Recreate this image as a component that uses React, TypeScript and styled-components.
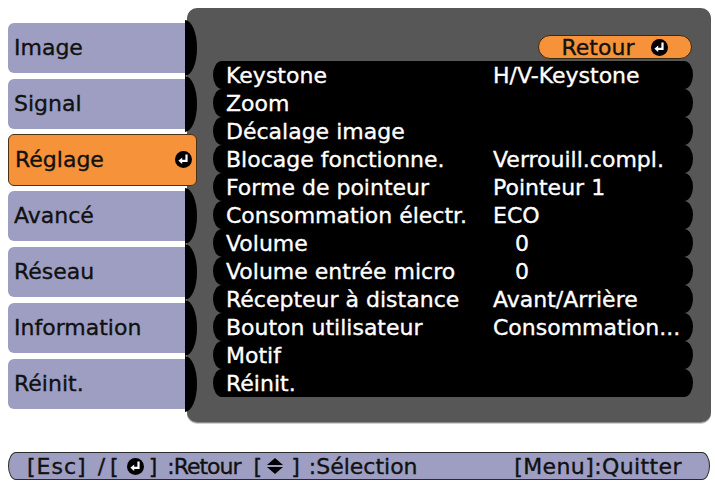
import styled, { createGlobalStyle } from "styled-components";

const GlobalStyle = createGlobalStyle`
  html, body {
    margin: 0;
    background: #ffffff;
  }
  body {
    font-family: "DejaVu Sans", "Liberation Sans", sans-serif;
    -webkit-text-stroke: 0.35px currentColor;
  }
`;

const LAVENDER = "#9e9ec2";
const ORANGE = "#f5923a";

const Screen = styled.div`
  width: 715px;
  height: 482px;
  box-sizing: border-box;
  padding: 8px 0 0 8px;
  overflow: hidden;
`;

const Top = styled.div`
  display: flex;
  align-items: flex-start;
`;

const TabColumn = styled.ul`
  list-style: none;
  margin: 12px 0 0;
  padding: 0;
  width: 189px;
  position: relative;
  z-index: 1;
`;

const TabItem = styled.li`
  height: 56px;
  display: flex;
`;

const TabLabel = styled.div<{ $active?: boolean }>`
  flex: 1;
  box-sizing: border-box;
  display: flex;
  align-items: center;
  justify-content: space-between;
  font-size: 22px;
  color: #111;
  padding: 0 6px 2px 6px;
  ${(p) =>
    p.$active
      ? `
    margin: 2px 0;
    background: ${ORANGE};
    border: 1px solid #4a3114;
    border-radius: 6px;
    padding-right: 4px;
  `
      : `
    margin: 3px 0;
    background: ${LAVENDER};
    border-radius: 6px 0 0 6px;
  `}
`;

const Cap = styled.div`
  width: 12px;
  background: #000;
  border-radius: 0 12px 12px 0 / 0 28px 28px 0;
`;

const Panel = styled.section`
  margin-left: -10px;
  width: 524px;
  height: 414px;
  box-sizing: border-box;
  background: #575757;
  border-radius: 10px;
  padding: 27px 18px 0 26px;
  display: flex;
  flex-direction: column;
  box-shadow: 0 1px 0 #8a8a8a, 0 2px 0 #d0d0d0;
`;

const PillRow = styled.div`
  display: flex;
  justify-content: flex-end;
  padding-right: 1px;
`;

const Pill = styled.div`
  width: 154px;
  height: 24px;
  box-sizing: border-box;
  background: ${ORANGE};
  border: 1px solid #3a2810;
  border-radius: 12px;
  display: flex;
  align-items: center;
  justify-content: center;
  gap: 17px;
  font-size: 22px;
  color: #111;
`;

const List = styled.ul`
  list-style: none;
  margin: 2px 0 0;
  padding: 0;
`;

const Row = styled.li`
  height: 28px;
  display: flex;
  align-items: center;
  background: #000;
  border-radius: 9px / 14px;
  color: #fff;
  font-size: 22px;
  padding-left: 13px;
  white-space: nowrap;
`;

const RowLabel = styled.span`
  width: 267px;
`;

const RowValue = styled.span<{ $indent?: boolean }>`
  padding-left: ${(p) => (p.$indent ? "22px" : "0")};
`;

const Footer = styled.footer`
  margin-top: 30px;
  width: 702px;
  height: 28px;
  box-sizing: border-box;
  background: ${LAVENDER};
  border: 1px solid #2a2a2a;
  border-radius: 8px / 14px;
  display: flex;
  align-items: center;
  justify-content: space-between;
  padding: 0 27px 0 18px;
  font-size: 22px;
  color: #111;
  white-space: nowrap;
`;

const Hint = styled.span`
  display: flex;
  align-items: center;
`;

const Part = styled.span<{ $gap?: number; $spacing?: number }>`
  display: inline-flex;
  align-items: center;
  margin-left: ${(p) => p.$gap ?? 0}px;
  letter-spacing: ${(p) => p.$spacing ?? 0}px;
`;

function EnterIcon() {
  return (
    <svg width="17" height="17" viewBox="0 0 17 17">
      <circle cx="8.5" cy="8.5" r="8.5" fill="#000" />
      <path d="M11.5 3.5 V9.8 H6.5" stroke="#fff" strokeWidth="2.2" fill="none" />
      <path d="M3.4 9.8 L7.2 6.6 L7.2 13 Z" fill="#fff" />
    </svg>
  );
}

function UpDownIcon() {
  return (
    <svg width="18" height="18" viewBox="0 0 18 18">
      <path d="M9 1 L17 8 L1 8 Z" fill="#000" />
      <path d="M1 10 L17 10 L9 17 Z" fill="#000" />
    </svg>
  );
}

const tabs = ["Image", "Signal", "Réglage", "Avancé", "Réseau", "Information", "Réinit."];

const rows: { label: string; value?: string; indent?: boolean }[] = [
  { label: "Keystone", value: "H/V-Keystone" },
  { label: "Zoom" },
  { label: "Décalage image" },
  { label: "Blocage fonctionne.", value: "Verrouill.compl." },
  { label: "Forme de pointeur", value: "Pointeur 1" },
  { label: "Consommation électr.", value: "ECO" },
  { label: "Volume", value: "0", indent: true },
  { label: "Volume entrée micro", value: "0", indent: true },
  { label: "Récepteur à distance", value: "Avant/Arrière" },
  { label: "Bouton utilisateur", value: "Consommation..." },
  { label: "Motif" },
  { label: "Réinit." },
];

export default function App() {
  return (
    <Screen>
      <GlobalStyle />
      <Top>
        <TabColumn>
          {tabs.map((t) => {
            const active = t === "Réglage";
            return (
              <TabItem key={t}>
                <TabLabel $active={active}>
                  {t}
                  {active && <EnterIcon />}
                </TabLabel>
                {!active && <Cap />}
              </TabItem>
            );
          })}
        </TabColumn>
        <Panel>
          <PillRow>
            <Pill>
              Retour
              <EnterIcon />
            </Pill>
          </PillRow>
          <List>
            {rows.map((r) => (
              <Row key={r.label}>
                <RowLabel>{r.label}</RowLabel>
                {r.value && <RowValue $indent={r.indent}>{r.value}</RowValue>}
              </Row>
            ))}
          </List>
        </Panel>
      </Top>
      <Footer>
        <Hint>
          <Part $spacing={1}>[Esc]</Part>
          <Part $gap={11}>/</Part>
          <Part $gap={5}>[</Part>
          <Part $gap={8}>
            <EnterIcon />
          </Part>
          <Part $gap={5}>]</Part>
          <Part $gap={10} $spacing={-1}>:Retour</Part>
          <Part $gap={13}>[</Part>
          <Part $gap={4}>
            <UpDownIcon />
          </Part>
          <Part $gap={7}>]</Part>
          <Part $gap={9}>:Sélection</Part>
        </Hint>
        <Hint>
          <Part $spacing={0.4}>[Menu]:Quitter</Part>
        </Hint>
      </Footer>
    </Screen>
  );
}
